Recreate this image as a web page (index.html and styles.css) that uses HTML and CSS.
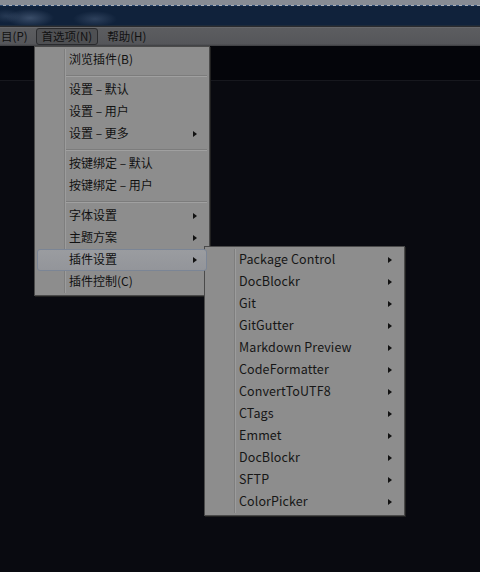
FILE: index.html
```html
<!DOCTYPE html>
<html lang="zh-CN">
<head>
<meta charset="utf-8">
<title>Sublime Text 首选项</title>
<link rel="stylesheet" href="styles.css">
</head>
<body>
<div class="window">
  <div class="desk-strip"></div>
  <div class="titlebar"></div>
  <div class="menubar">
    <span class="mb-item mb-cut">目(P)</span>
    <span class="mb-item mb-active">首选项(N)</span>
    <span class="mb-item">帮助(H)</span>
  </div>
  <div class="editor">
    <div class="tabs"></div>
    <div class="code"></div>
  </div>

  <div class="menu menu-main">
    <div class="mi">浏览插件(B)</div>
    <div class="sep"></div>
    <div class="mi">设置 – 默认</div>
    <div class="mi">设置 – 用户</div>
    <div class="mi sub">设置 – 更多</div>
    <div class="sep"></div>
    <div class="mi">按键绑定 – 默认</div>
    <div class="mi">按键绑定 – 用户</div>
    <div class="sep"></div>
    <div class="mi sub">字体设置</div>
    <div class="mi sub">主题方案</div>
    <div class="mi sub hot">插件设置</div>
    <div class="mi">插件控制(C)</div>
  </div>

  <div class="menu menu-sub">
    <div class="mi sub">Package Control</div>
    <div class="mi sub">DocBlockr</div>
    <div class="mi sub">Git</div>
    <div class="mi sub">GitGutter</div>
    <div class="mi sub">Markdown Preview</div>
    <div class="mi sub">CodeFormatter</div>
    <div class="mi sub">ConvertToUTF8</div>
    <div class="mi sub">CTags</div>
    <div class="mi sub">Emmet</div>
    <div class="mi sub">DocBlockr</div>
    <div class="mi sub">SFTP</div>
    <div class="mi sub">ColorPicker</div>
  </div>
</div>
</body>
</html>
```

FILE: styles.css
```css
* { box-sizing: border-box; }
html, body { margin: 0; padding: 0; }
body {
  width: 480px;
  height: 572px;
  overflow: hidden;
  background: #090a10;
  font-family: "Noto Sans CJK SC", "Noto Sans", sans-serif;
  font-size: 12px;
  color: #111;
}
.window {
  position: relative;
  width: 480px;
  height: 572px;
  display: flex;
  flex-direction: column;
}
.desk-strip {
  height: 6px;
  background:
    repeating-linear-gradient(90deg, #2c4a72 0 3px, #a9b0ba 3px 6px) bottom / 100% 1px no-repeat,
    #878c94;
}
.titlebar {
  height: 20px;
  background:
    radial-gradient(ellipse 24px 9px at 30px 12px, rgba(100,120,150,0.5), transparent),
    radial-gradient(ellipse 22px 8px at 95px 13px, rgba(90,110,140,0.4), transparent),
    radial-gradient(ellipse 14px 7px at 6px 10px, rgba(80,100,130,0.35), transparent),
    #10223b;
  border-bottom: 1px solid #1d2a3a;
}
.menubar {
  height: 20px;
  display: flex;
  align-items: center;
  background: linear-gradient(#67686b 0 1px, #5c5d60 1px, #55565a 17px, #3c3d40 19px);
  border-top: 1px solid #2a2b2e;
  font-size: 11.5px;
}
.mb-item {
  height: 17px;
  line-height: 14px;
  padding: 0 5px;
  border: 1px solid transparent;
  color: #111;
}
.mb-cut { padding-left: 0; margin-right: 2px; }
.mb-active {
  border-color: #2a2b2e;
  border-radius: 3px;
  background: #4f5053;
  margin-right: 3px;
}
.editor {
  flex: 1;
  display: flex;
  flex-direction: column;
}
.tabs {
  height: 35px;
  background: #04050a;
  border-bottom: 1px solid #17181e;
}
.code {
  flex: 1;
  background: #090a10;
}

.menu {
  position: absolute;
  background: #8d8d8d;
  border: 1px solid #4a4a4a;
  padding: 2px 0;
  display: flex;
  flex-direction: column;
  box-shadow: 1px 1px 0 #202020;
}
.menu::before {
  content: "";
  position: absolute;
  top: 2px;
  bottom: 2px;
  left: 29px;
  width: 2px;
  background: linear-gradient(90deg, #7e7e7e 0 1px, #9c9c9c 1px);
}
.menu-main { left: 34px; top: 46px; width: 176px; }
.menu-sub { left: 204px; top: 246px; width: 201px; }

.mi {
  position: relative;
  height: 22px;
  line-height: 18px;
  margin: 0 2px;
  padding: 0 9px 2px 31px;
  border: 1px solid transparent;
  border-radius: 3px;
  white-space: nowrap;
  display: flex;
  align-items: center;
  justify-content: space-between;
}
.menu-sub .mi { font-size: 12.5px; letter-spacing: 0.1px; color: #161616; }
.mi.sub::after {
  content: "";
  width: 0;
  height: 0;
  margin-top: 2px;
  border-top: 3.5px solid transparent;
  border-bottom: 3.5px solid transparent;
  border-left: 4px solid #111;
}
.mi.hot {
  background: linear-gradient(#9a9ca0, #93959a);
  border-color: #7b8595;
  z-index: 1;
}
.sep {
  position: relative;
  height: 8px;
  margin-left: 31px;
  margin-right: 2px;
}
.sep::after {
  content: "";
  position: absolute;
  left: 0;
  right: 0;
  top: 4px;
  height: 2px;
  background: linear-gradient(#7c7c7c 0 1px, #a0a0a0 1px);
}
```
